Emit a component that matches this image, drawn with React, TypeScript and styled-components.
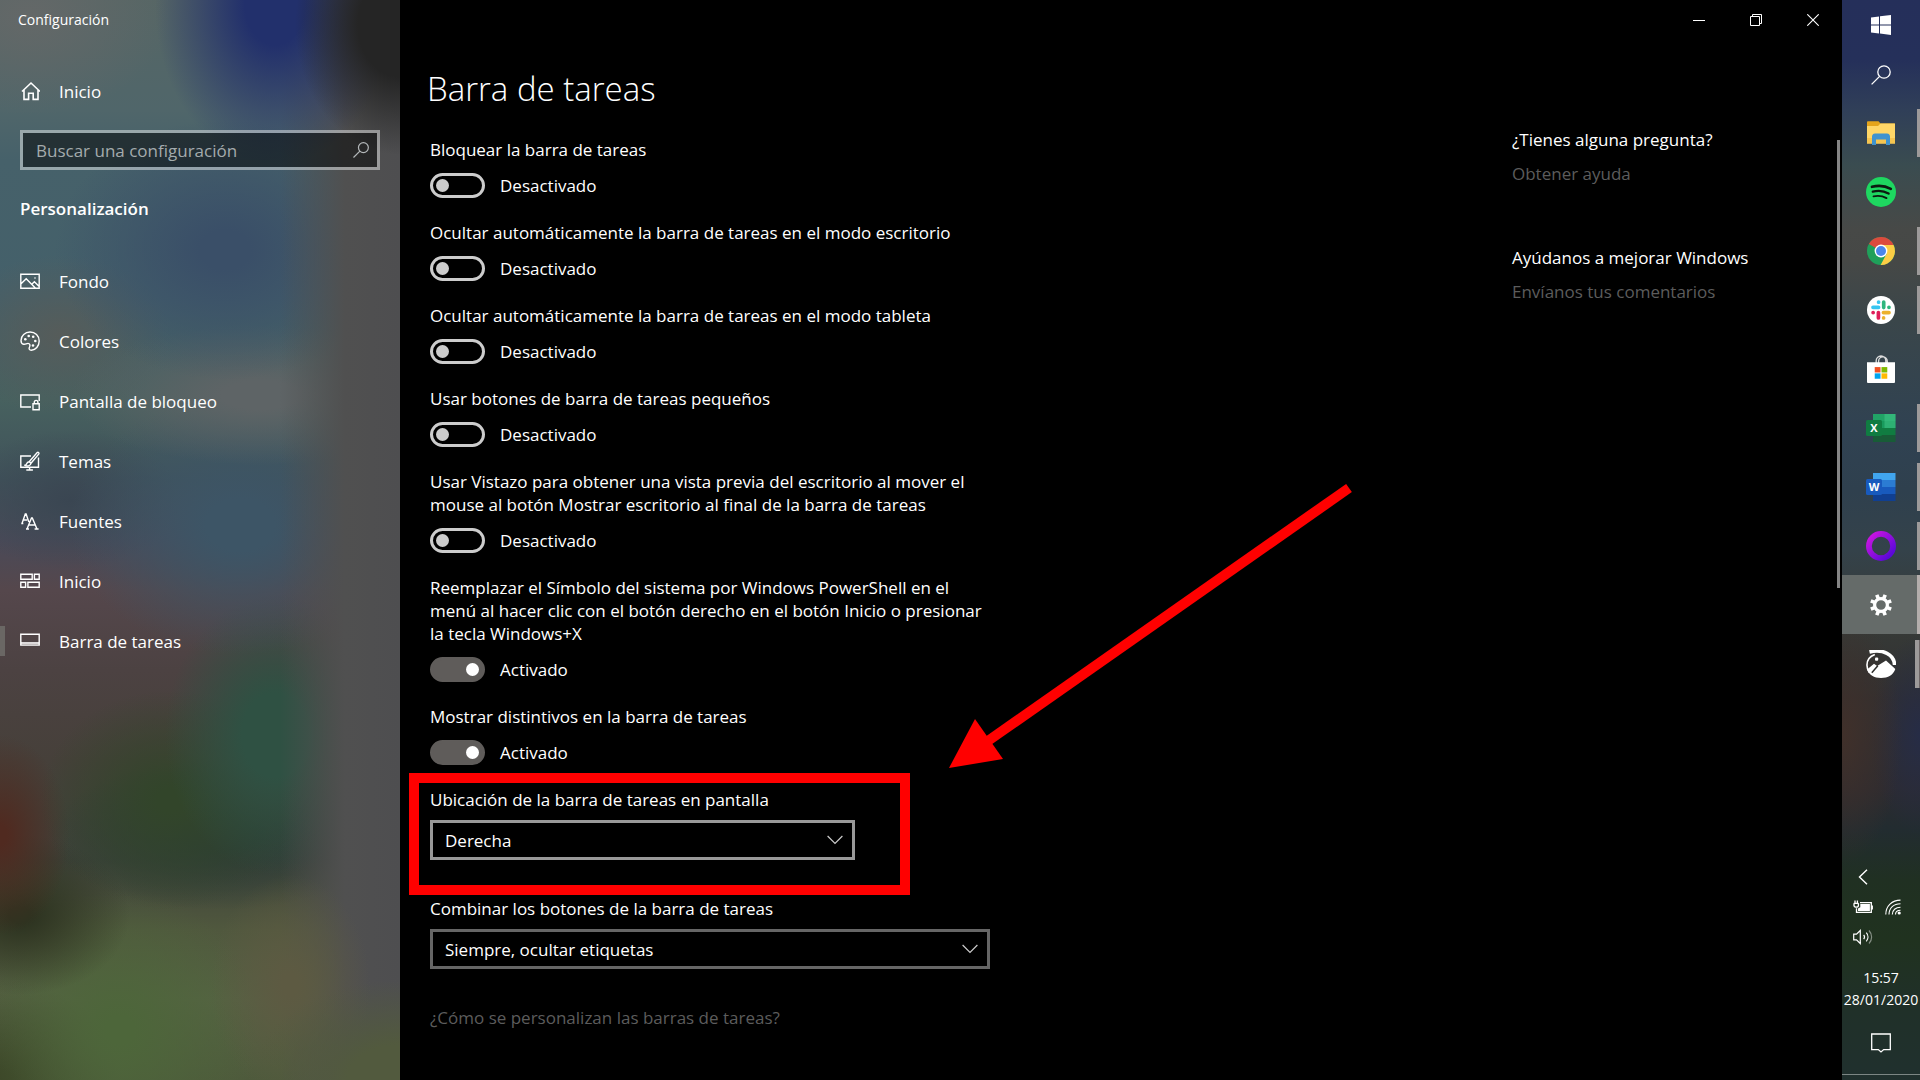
import React, { useId, useState } from "react";
import styled, { createGlobalStyle, css } from "styled-components";

const GlobalStyle = createGlobalStyle`
  *, *::before, *::after { box-sizing: border-box; }
  body {
    margin: 0;
    background: #000;
    color: #fff;
    font-family: "Segoe UI", "Open Sans", "Noto Sans", sans-serif;
    font-size: 17px;
    line-height: 23px;
  }
  button, input, select { font: inherit; color: inherit; }
  button { border: 0; padding: 0; background: none; }
  h1, h2, p { margin: 0; font: inherit; }
  svg { display: block; flex: none; }
`;

const Desktop = styled.div`
  display: grid;
  grid-template-columns: 400px minmax(0, 1fr) 78px;
  min-height: 100vh;
`;

/* ---------- Sidebar ---------- */

const Sidebar = styled.aside`
  display: flex;
  flex-direction: column;
  background:
    radial-gradient(105px 130px at 400px 25px, #252525 40%, #25252500 100%),
    radial-gradient(150px 100px at 400px 1080px, #525a3e 35%, #525a3e00 100%),
    radial-gradient(80px 110px at 290px 985px, #5d5a42 10%, #5d5a4200 100%),
    radial-gradient(120px 160px at 275px 5px, #22306c 25%, #22306c00 100%),
    linear-gradient(90deg, #50505000 280px, #505050 345px, #4e4e50 400px),
    radial-gradient(140px 100px at 30px 15px, #646868 0, #64686800 100%),
    radial-gradient(170px 130px at 225px 250px, #3a4f68 15%, #3a4f6800 100%),
    radial-gradient(190px 70px at 260px 395px, #5e6466 20%, #5e646600 100%),
    radial-gradient(170px 130px at 240px 525px, #3d5566 20%, #3d556600 100%),
    radial-gradient(110px 80px at 60px 335px, #565c5a 0, #565c5a00 100%),
    radial-gradient(110px 70px at 70px 500px, #3a4652 0, #3a465200 100%),
    radial-gradient(110px 140px at 275px 735px, #2f5143 30%, #2f514300 100%),
    radial-gradient(130px 110px at 170px 800px, #32452a 10%, #32452a00 100%),
    radial-gradient(170px 75px at 220px 835px, #2c3d36 20%, #2c3d3600 100%),
    radial-gradient(70px 100px at 0 835px, #502a20 10%, #502a2000 100%),
    radial-gradient(110px 80px at 20px 915px, #2d3320 10%, #2d332000 100%),
    radial-gradient(140px 140px at 120px 1030px, #4d663a 10%, #4d663a00 100%),
    radial-gradient(120px 100px at 0 1080px, #3c4628 10%, #3c462800 100%),
    linear-gradient(180deg, #566665 0, #50666a 110px, #46616a 160px, #44606a 300px,
      #47615f 400px, #40525a 480px, #4a4a58 540px, #55474c 590px, #4c4242 670px,
      #46403a 760px, #3e423a 860px, #50583e 930px, #566244 1000px, #4e5a3c 1080px);
`;

const AppTitle = styled.p`
  padding: 9px 18px;
  font-size: 14px;
  line-height: 22px;
`;

const rowStyles = css`
  display: flex;
  align-items: center;
  gap: 19px;
  padding: 0 20px;
  color: #fff;
  text-decoration: none;
`;

const HomeLink = styled.a`
  ${rowStyles}
  height: 60px;
  margin-top: 21px;
`;

const SearchBox = styled.label`
  display: flex;
  align-items: center;
  height: 40px;
  margin: 9px 20px 0;
  padding: 0 8px 0 13px;
  border: 3px solid #ffffff70;
  background: #00000080;
  background-clip: padding-box;
  color: #b4b8ba;
`;

const SearchInput = styled.input`
  flex: 1;
  min-width: 0;
  padding: 0;
  border: 0;
  outline: 0;
  background: transparent;
  &::placeholder { color: #a4abad; opacity: 1; }
`;

const SectionTitle = styled.h2`
  margin: 27px 20px 0;
  font-weight: 600;
  line-height: 24px;
`;

const NavList = styled.nav`
  display: flex;
  flex-direction: column;
  margin-top: 30px;
`;

const NavLink = styled.a<{ $active?: boolean }>`
  ${rowStyles}
  height: 60px;
  background: ${(p) =>
    p.$active ? "linear-gradient(#6a6764, #6a6764) left center / 5px 30px no-repeat" : "none"};
`;

/* ---------- Main pane ---------- */

const Main = styled.main`
  position: relative;
  display: flex;
  flex-direction: column;
  background: #000;
`;

const TitleBar = styled.header`
  display: flex;
  justify-content: flex-end;
  height: 40px;
  padding-right: 1px;
`;

const WindowButton = styled.button`
  display: grid;
  place-items: center;
  width: 57px;
  height: 40px;
`;

const Pane = styled.div`
  flex: 1;
  display: flex;
  justify-content: space-between;
  gap: 24px;
`;

const Settings = styled.section`
  display: flex;
  flex-direction: column;
  align-items: flex-start;
  padding: 26px 0 0 30px;
`;

const PageTitle = styled.h1`
  margin: 0 0 26px -3px;
  font-size: 33px;
  font-weight: 300;
  line-height: 46px;
`;

const ToggleField = styled.div`
  display: flex;
  flex-direction: column;
  gap: 12px;
  max-width: 560px;
  margin-bottom: 23px;
`;

const ToggleRow = styled.div`
  display: flex;
  align-items: center;
  gap: 15px;
  height: 25px;
`;

const Switch = styled.input`
  appearance: none;
  display: flex;
  align-items: center;
  justify-content: flex-start;
  width: 55px;
  height: 25px;
  margin: 0;
  padding: 0 3px;
  border: 3px solid #ccc;
  border-radius: 13px;
  &::before {
    content: "";
    width: 13px;
    height: 13px;
    border-radius: 50%;
    background: #ccc;
  }
  &:checked {
    justify-content: flex-end;
    border-color: #5f5c5a;
    background: #5f5c5a;
  }
  &:checked::before { background: #fff; }
`;

const SelectField = styled.div<{ $width: number }>`
  position: relative;
  display: flex;
  flex-direction: column;
  gap: 9px;
  width: ${(p) => p.$width}px;
  margin-bottom: 37px;
`;

const SelectBox = styled.div<{ $bright?: boolean }>`
  display: grid;
  align-items: center;
  border: 3px solid ${(p) => (p.$bright ? "#999" : "#666")};
  > * { grid-area: 1 / 1; }
  > svg { justify-self: end; margin-right: 9px; color: #ccc; pointer-events: none; }
`;

const Select = styled.select`
  appearance: none;
  width: 100%;
  height: 34px;
  padding: 0 40px 0 12px;
  border: 0;
  outline: 0;
  background: #000;
`;

const Highlight = styled.div`
  position: absolute;
  inset: -15px -55px -35px -21px;
  border: 10px solid #f00;
  pointer-events: none;
`;

const MutedLink = styled.a`
  color: #5c5c5c;
  text-decoration: none;
`;

const Help = styled.aside`
  display: flex;
  gap: 12px;
  align-items: flex-start;
  padding: 88px 2px 0 0;
`;

const HelpText = styled.div`
  display: flex;
  flex-direction: column;
  gap: 60px;
  width: 313px;
  line-height: 24px;
`;

const HelpGroup = styled.div`
  display: flex;
  flex-direction: column;
  gap: 10px;
`;

const ScrollThumb = styled.div`
  width: 3px;
  height: 448px;
  margin-top: 12px;
  background: #858585;
`;

const Arrow = styled.svg`
  position: absolute;
  left: 540px;
  top: 480px;
  pointer-events: none;
`;

/* ---------- Taskbar ---------- */

const Taskbar = styled.nav`
  display: flex;
  flex-direction: column;
  background:
    radial-gradient(60px 130px at 0 735px, #40302a 0, #40302a00 100%),
    radial-gradient(50px 100px at 78px 735px, #262c46 0, #262c4600 100%),
    linear-gradient(180deg, #252f5a 0, #25305a 60px, #303f58 110px, #3a4c50 165px,
      #474947 230px, #464846 260px, #3a464a 320px, #304252 430px, #2f404e 490px,
      #34424a 550px, #373b38 620px, #302f30 700px, #2c2b30 790px, #222c30 830px,
      #203022 880px, #20321f 940px, #203028 1000px, #20302e 1080px);
`;

const TaskButton = styled.button<{ $active?: boolean; $open?: boolean; $h?: number }>`
  display: flex;
  align-items: center;
  justify-content: center;
  height: ${(p) => p.$h ?? 59}px;
  background: ${(p) =>
    p.$active
      ? "linear-gradient(#b4aeac, #b4aeac) right center / 3px 100% no-repeat, #656b69"
      : p.$open
        ? "linear-gradient(#9d9a9a, #9d9a9a) right center / 3px 48px no-repeat"
        : "none"};
`;

const StackedTaskButton = styled(TaskButton)`
  background:
    linear-gradient(#9d9a9a, #9d9a9a) right 1px center / 4px 48px no-repeat,
    linear-gradient(#6d6566, #6d6566) right center / 1px 48px no-repeat;
`;

const StartArea = styled.div`
  display: flex;
  flex-direction: column;
  padding-bottom: 3px;
`;

const Tray = styled.div`
  display: flex;
  flex-direction: column;
  margin-top: auto;
`;

const TrayIcons = styled.div`
  display: grid;
  grid-template-columns: 20px 16px;
  grid-auto-rows: 30px;
  align-items: center;
  column-gap: 12px;
  padding-left: 11px;
`;

const TrayButton = styled.button`
  display: grid;
  place-items: center;
`;

const Clock = styled.button`
  display: flex;
  flex-direction: column;
  align-items: center;
  margin-top: 15px;
  font-size: 14px;
  line-height: 22px;
`;

const Notifications = styled.button`
  display: grid;
  place-items: center;
  height: 62px;
  margin-top: 1px;
`;

const ShowDesktop = styled.button`
  height: 6px;
  border-top: 1px solid #7c8684;
`;

/* ---------- Icons ---------- */

type LineProps = { w?: number; h?: number; sw?: number; box?: string; children: React.ReactNode };

const Line = ({ w = 20, h = 20, sw = 1.4, box, children }: LineProps) => (
  <svg width={w} height={h} viewBox={box ?? `0 0 ${w} ${h}`} fill="none" stroke="currentColor" strokeWidth={sw} aria-hidden="true">
    {children}
  </svg>
);

const HomeIcon = () => (
  <Line sw={1.6}>
    <path d="M2 10.5 11 2l9 8.500M4 9v9.400h4.600v-6.200h4.600v6.200H18V9" />
  </Line>
);
const SearchIcon = ({ size = 16 }: { size?: number }) => (
  <Line w={size} h={size} box="0 0 20 20" sw={size > 18 ? 1.3 : 1.5}>
    <circle cx="13" cy="7" r="6.2" />
    <path d="M8.6 11.4.6 19.4" />
  </Line>
);
const PictureIcon = () => (
  <Line>
    <path d="M.8 3.300h18.400v14H.8zM.8 13l5.400-5.200 9.400 9.400M11.800 13.300l2.600-2.600 4.800 4.800" />
    <circle cx="15" cy="7" r="0.8" fill="currentColor" stroke="none" />
  </Line>
);
const PaletteIcon = () => (
  <Line>
    <path d="M1 9.400C1 4.700 5.100 1 10 1c5.200 0 9.200 3.900 9.200 9 0 5-3.700 9.200-7.800 9.200-2.200 0-2.800-1.500-1.900-3.200.9-1.800.3-3.600-1.500-3.600-1.700 0-2.600 1.300-4.400.8C1.900 12.800 1 11.400 1 9.400z" />
    <g fill="currentColor" stroke="none">
      <circle cx="5.300" cy="8.300" r="1.300" />
      <circle cx="8.700" cy="5" r="1.300" />
      <circle cx="13.200" cy="5.700" r="1.300" />
      <circle cx="15.300" cy="10" r="1.300" />
      <circle cx="13" cy="14.500" r="1.300" />
    </g>
  </Line>
);
const LockScreenIcon = () => (
  <Line>
    <path d="M11 16H.8V4h18.400v6M13 12.800h6.200v6H13zM14.300 12.800v-1.600a1.800 1.800 0 0 1 3.600 0v1.600" />
  </Line>
);
const ThemesIcon = () => (
  <Line>
    <path d="M11 5H.8v11.300h17.700V6.500M9.600 16.300V19M6.300 19h6.600" />
    <path d="M9.200 10.700 17.200 1.600c1-.8 2.300.4 1.500 1.500L11 12.300M9.200 10.700c-2.100 0-2.400 1.400-2.800 2.500-.3.700-1 .9-2 .9 2.600 1.400 6.300 1.200 6.600-1.800z" />
  </Line>
);
const FontsIcon = () => (
  <Line>
    <path d="M2 12.500 5.300 3h.8l2.700 8M3.300 9h3.800M1.300 12.500h2M7 18l4.500-11h.8L17 18M8.700 14h6.600M6 18h3M14.600 18h4" />
  </Line>
);
const StartTilesIcon = () => (
  <Line>
    <path d="M.8 3.300h11.400v4.900H.8zM14.400 3.300h4.800v4.900h-4.800zM.8 11.200h4.800v5H.8zM7.900 11.200h11.300v5H7.900z" />
  </Line>
);
const TaskbarIcon = () => (
  <Line>
    <path d="M.8 3.300h18.400v10.800H.8z" />
    <path d="M1 12.200h18" strokeWidth="2.400" opacity="0.8" />
  </Line>
);
const ChevronDown = () => (
  <Line w={16} h={10} sw={1.2}>
    <path d="M.6 1 8 8.400 15.400 1" />
  </Line>
);

const WindowsIcon = () => (
  <svg width="20" height="20" viewBox="0 0 20 20" fill="#fff" aria-hidden="true">
    <path d="M0 2.500 8 1.400v8H0zM9 1.200 20 0v9.400H9zM0 10.400h8v8.100l-8-1.100zM9 10.400h11V20L9 18.600z" />
  </svg>
);
const FolderIcon = () => (
  <svg width="28" height="24" viewBox="0 0 28 24" aria-hidden="true">
    <path d="M0 1.500C0 .7.400.3 1 .3h10.500l2 2.200H27c.6 0 1 .3 1 1V22H0z" fill="#e5a51b" />
    <path d="M0 5h11l2.500-2.500H28v20H0z" fill="#ffd767" />
    <path d="M0 17h28v5.500H0z" fill="#f6c550" />
    <path d="M5 24v-8.500c0-1.500 1-3 3-3h12c2 0 3 1.500 3 3V24h-4v-5.500H9V24z" fill="#3f93cf" />
  </svg>
);
const SpotifyIcon = () => (
  <svg width="30" height="30" viewBox="0 0 30 30" aria-hidden="true">
    <circle cx="15" cy="15" r="15" fill="#1ed760" />
    <g fill="none" stroke="#0c1a10" strokeLinecap="round">
      <path d="M6 9.800c6.500-1.700 13.500-.9 18.800 2.100" strokeWidth="2.700" />
      <path d="M6.800 14.700c5.400-1.400 11.300-.7 15.800 1.900" strokeWidth="2.300" />
      <path d="M7.500 19.400c4.500-1 9.200-.4 13 1.700" strokeWidth="1.900" />
    </g>
  </svg>
);
const ChromeIcon = () => (
  <svg width="28" height="28" viewBox="0 0 28 28" aria-hidden="true">
    <circle cx="14" cy="14" r="14" fill="#1fa05a" />
    <path d="M14 14 1.900 7A14 14 0 0 1 26.600 8H14z" fill="#dc4a3d" />
    <path d="M14 8h12.600A14 14 0 0 1 13.600 28L19.500 17z" fill="#fccd45" />
    <circle cx="14" cy="14" r="6.400" fill="#fff" />
    <circle cx="14" cy="14" r="5" fill="#4a86ea" />
  </svg>
);
const SlackIcon = () => (
  <svg width="28" height="28" viewBox="0 0 29 29" aria-hidden="true">
    <circle cx="14.500" cy="14.500" r="14.500" fill="#fff" />
    <g strokeWidth="3.800" strokeLinecap="round" fill="none">
      <path d="M6.200 11.700h5.800M12 6.300v.2" stroke="#36c5f0" />
      <path d="M17.300 6.300V12M22.700 11.700h.1" stroke="#2eb67d" />
      <path d="M17 17.300h5.800M17.200 22.700v.1" stroke="#ecb22e" />
      <path d="M11.800 17.200v5.600M6.300 17.300h.1" stroke="#e01e5a" />
    </g>
  </svg>
);
const StoreIcon = () => (
  <svg width="28" height="28" viewBox="0 0 29 29" aria-hidden="true">
    <path d="M9.500 8.500V6a5 5 0 0 1 10 0v2.500M12 8.500V6.500a4.500 4.500 0 0 1 9 0v2" fill="none" stroke="#ddd" strokeWidth="1.400" />
    <path d="M0 7.500h29V28a1 1 0 0 1-1 1H1a1 1 0 0 1-1-1z" fill="#fff" />
    <path d="M8 12.500h6v5.600H8z" fill="#f25022" />
    <path d="M15 12.500h6v5.600h-6z" fill="#7fba00" />
    <path d="M8 19h6v5.600H8z" fill="#00a4ef" />
    <path d="M15 19h6v5.600h-6z" fill="#ffb900" />
  </svg>
);

const OfficeIcon = ({ letter, shades, tile, split }: { letter: string; shades: string[]; tile: string; split?: boolean }) => (
  <svg width="30" height="28" viewBox="0 0 30 28" aria-hidden="true">
    {shades.map((c, i) => (
      <path key={c} d={`M7 ${i * 7}h22.500v7H7z`} fill={c} />
    ))}
    {split && <path d="M18.500 0h11v7h-11zM18.500 7h11v7h-11z" fill="#4fd596" opacity="0.400" />}
    <rect y="6" width="16" height="16" rx="1.500" fill={tile} />
    <text x="8" y="18" textAnchor="middle" fill="#fff" fontSize="11" fontWeight="700" fontFamily="Open Sans, sans-serif">
      {letter}
    </text>
  </svg>
);

const RingIcon = () => (
  <svg width="30" height="30" viewBox="0 0 30 30" aria-hidden="true">
    <defs>
      <linearGradient id="ring" x1="0" y1="0" x2="1" y2="1">
        <stop offset="0.100" stopColor="#c414e0" />
        <stop offset="0.900" stopColor="#5a08d8" />
      </linearGradient>
    </defs>
    <circle cx="15" cy="15" r="12.100" fill="none" stroke="url(#ring)" strokeWidth="5.800" />
  </svg>
);
const GearIcon = () => (
  <svg width="22" height="22" viewBox="0 0 22 22" fill="none" stroke="#fff" aria-hidden="true">
    <circle cx="11" cy="11" r="6.400" strokeWidth="3.200" />
    {[22.5, 67.5, 112.5, 157.5, 202.5, 247.5, 292.5, 337.5].map((a) => (
      <path key={a} d="M11 0v4.200" strokeWidth="3.600" transform={`rotate(${a} 11 11)`} />
    ))}
  </svg>
);
const LandscapeIcon = () => (
  <svg width="30" height="28" viewBox="0 0 30 28" aria-hidden="true">
    <path d="M3.500 1.900C17-1.200 28.200 4.300 28.600 15" fill="none" stroke="#fff" strokeWidth="3.600" />
    <path d="M8.800 4.500C3.500 6.500 .8 11 1 15.500c0 3 1 5 2.300 7" fill="none" stroke="#fff" strokeWidth="1.600" />
    <path d="M1 19.500 8 13.700l3.200 2.200L20 10.500l9.300 8.500C27.500 24.800 22 28 15 28S3 24.500 1 19.500z" fill="#fff" />
    <path d="m5.800 22.800 6-7" stroke="#2c2c2a" strokeWidth="1.500" />
    <rect x="9" y="7.500" width="3.200" height="3.200" rx="1" fill="#fff" />
  </svg>
);

const BatteryIcon = () => (
  <Line w={20} h={14} sw={1.3}>
    <path d="M7 2.600h11.300v9.800H3.500V8.200M.8 3.300h4.700M1 3.300v2.200c0 1.200 1 1.700 2.200 1.700s2.200-.5 2.200-1.700V3.300M2 3V.5M4.400 3V.5M19.300 5.500v4" />
    <path d="M7.300 4h9.600v7H5V8.600l2.300-1.400z" fill="currentColor" stroke="none" />
  </Line>
);
const WifiIcon = () => (
  <Line w={16} h={16} sw={1.1}>
    <path d="M.8 15.500C.8 7 7 1.100 15.500 1.100M4 15.500C4 9 8.700 4.700 15.500 4.700M7.300 15.500c0-4.200 3.300-7.300 8.200-7.300M10.500 15.500c0-2.500 2-4.300 5-4.300" />
    <circle cx="14.200" cy="14" r="1.600" fill="currentColor" stroke="none" />
  </Line>
);
const SpeakerIcon = () => (
  <Line w={20} h={16} sw={1.2}>
    <path d="M.7 5.200h2.800L7.300 1.500v13L3.500 10.800H.7zM10.700 5.800c1 1.300 1 3.100 0 4.400M13.300 3.700c2.200 2.500 2.200 6.100 0 8.600" />
    <path d="M16 1.500c3.500 3.800 3.500 9.200 0 13" opacity="0.450" />
  </Line>
);

/* ---------- Data ---------- */

const navItems = [
  { label: "Fondo", icon: <PictureIcon /> },
  { label: "Colores", icon: <PaletteIcon /> },
  { label: "Pantalla de bloqueo", icon: <LockScreenIcon /> },
  { label: "Temas", icon: <ThemesIcon /> },
  { label: "Fuentes", icon: <FontsIcon /> },
  { label: "Inicio", icon: <StartTilesIcon /> },
  { label: "Barra de tareas", icon: <TaskbarIcon />, active: true },
];

const toggles = [
  { label: "Bloquear la barra de tareas", on: false },
  { label: "Ocultar automáticamente la barra de tareas en el modo escritorio", on: false },
  { label: "Ocultar automáticamente la barra de tareas en el modo tableta", on: false },
  { label: "Usar botones de barra de tareas pequeños", on: false },
  {
    label: "Usar Vistazo para obtener una vista previa del escritorio al mover el mouse al botón Mostrar escritorio al final de la barra de tareas",
    on: false,
  },
  {
    label: "Reemplazar el Símbolo del sistema por Windows PowerShell en el menú al hacer clic con el botón derecho en el botón Inicio o presionar la tecla Windows+X",
    on: true,
  },
  { label: "Mostrar distintivos en la barra de tareas", on: true },
];

const helpGroups = [
  { title: "¿Tienes alguna pregunta?", link: "Obtener ayuda" },
  { title: "Ayúdanos a mejorar Windows", link: "Envíanos tus comentarios" },
];

const apps = [
  { name: "Explorador de archivos", icon: <FolderIcon />, open: true },
  { name: "Spotify", icon: <SpotifyIcon /> },
  { name: "Chrome", icon: <ChromeIcon />, open: true },
  { name: "Slack", icon: <SlackIcon />, open: true },
  { name: "Microsoft Store", icon: <StoreIcon /> },
  {
    name: "Excel",
    icon: <OfficeIcon letter="X" shades={["#21a366", "#189a5c", "#107c41", "#185c37"]} tile="#107c41" split />,
    open: true,
  },
  {
    name: "Word",
    icon: <OfficeIcon letter="W" shades={["#41a5ee", "#2b7cd3", "#185abd", "#103f91"]} tile="#185abd" />,
    open: true,
  },
  { name: "Cortana", icon: <RingIcon />, open: true },
  { name: "Configuración", icon: <GearIcon />, active: true },
];

/* ---------- Components ---------- */

function Toggle({ label, on }: { label: string; on: boolean }) {
  const id = useId();
  const [checked, setChecked] = useState(on);
  return (
    <ToggleField>
      <label htmlFor={id}>{label}</label>
      <ToggleRow>
        <Switch id={id} type="checkbox" checked={checked} onChange={() => setChecked(!checked)} />
        <span>{checked ? "Activado" : "Desactivado"}</span>
      </ToggleRow>
    </ToggleField>
  );
}

type DropdownProps = { label: string; options: string[]; width: number; bright?: boolean; highlighted?: boolean };

function Dropdown({ label, options, width, bright, highlighted }: DropdownProps) {
  const id = useId();
  return (
    <SelectField $width={width}>
      <label htmlFor={id}>{label}</label>
      <SelectBox $bright={bright}>
        <Select id={id}>
          {options.map((o) => (
            <option key={o}>{o}</option>
          ))}
        </Select>
        <ChevronDown />
      </SelectBox>
      {highlighted && <Highlight />}
    </SelectField>
  );
}

export default function App() {
  return (
    <>
      <GlobalStyle />
      <Desktop>
        <Sidebar>
          <AppTitle>Configuración</AppTitle>
          <HomeLink href="#inicio">
            <HomeIcon />
            Inicio
          </HomeLink>
          <SearchBox>
            <SearchInput type="text" placeholder="Buscar una configuración" aria-label="Buscar una configuración" />
            <SearchIcon />
          </SearchBox>
          <SectionTitle>Personalización</SectionTitle>
          <NavList>
            {navItems.map((item) => (
              <NavLink key={item.label} href="#" $active={item.active}>
                {item.icon}
                {item.label}
              </NavLink>
            ))}
          </NavList>
        </Sidebar>

        <Main>
          <TitleBar>
            <WindowButton aria-label="Minimizar">
              <Line w={12} h={12} sw={1}><path d="M0 6.500h12" /></Line>
            </WindowButton>
            <WindowButton aria-label="Restaurar">
              <Line w={12} h={12} sw={1}><path d="M.5 2.500h9v9h-9zM2.500 2.500v-2h9v9h-2" /></Line>
            </WindowButton>
            <WindowButton aria-label="Cerrar">
              <Line w={12} h={12} sw={1.1}><path d="m.3.300 11.400 11.400M11.700.300.300 11.700" /></Line>
            </WindowButton>
          </TitleBar>
          <Pane>
            <Settings>
              <PageTitle>Barra de tareas</PageTitle>
              {toggles.map((t) => (
                <Toggle key={t.label} label={t.label} on={t.on} />
              ))}
              <Dropdown
                label="Ubicación de la barra de tareas en pantalla"
                options={["Derecha", "Izquierda", "Superior", "Inferior"]}
                width={425}
                bright
                highlighted
              />
              <Dropdown
                label="Combinar los botones de la barra de tareas"
                options={["Siempre, ocultar etiquetas", "Nunca"]}
                width={560}
              />
              <MutedLink href="#">¿Cómo se personalizan las barras de tareas?</MutedLink>
            </Settings>
            <Help>
              <HelpText>
                {helpGroups.map((g) => (
                  <HelpGroup key={g.title}>
                    <h2>{g.title}</h2>
                    <MutedLink href="#">{g.link}</MutedLink>
                  </HelpGroup>
                ))}
              </HelpText>
              <ScrollThumb />
            </Help>
          </Pane>
          <Arrow width="420" height="295" viewBox="0 0 420 295" aria-hidden="true">
            <path d="M409 8 45 263" stroke="#f00" strokeWidth="10" />
            <path d="M9 288 35 239 63 279z" fill="#f00" />
          </Arrow>
        </Main>

        <Taskbar>
          <StartArea>
            <TaskButton $h={50} aria-label="Inicio"><WindowsIcon /></TaskButton>
            <TaskButton $h={50} aria-label="Buscar"><SearchIcon size={20} /></TaskButton>
          </StartArea>
          {apps.map((a) => (
            <TaskButton key={a.name} aria-label={a.name} $open={a.open} $active={a.active}>
              {a.icon}
            </TaskButton>
          ))}
          <StackedTaskButton aria-label="Fotos"><LandscapeIcon /></StackedTaskButton>
          <Tray>
            <TrayIcons>
              <TrayButton aria-label="Mostrar iconos ocultos">
                <Line w={10} h={16} sw={1.4}><path d="M9 .8 1.500 8 9 15.200" /></Line>
              </TrayButton>
              <span />
              <TrayButton aria-label="Batería"><BatteryIcon /></TrayButton>
              <TrayButton aria-label="Wi-Fi"><WifiIcon /></TrayButton>
              <TrayButton aria-label="Volumen"><SpeakerIcon /></TrayButton>
            </TrayIcons>
            <Clock>
              <span>15:57</span>
              <span>28/01/2020</span>
            </Clock>
            <Notifications aria-label="Notificaciones">
              <Line w={20} h={20} sw={1.3}><path d="M.7 1h18.600v15.600h-6.600L10 19l-2.700-2.400H.7z" /></Line>
            </Notifications>
            <ShowDesktop aria-label="Mostrar escritorio" />
          </Tray>
        </Taskbar>
      </Desktop>
    </>
  );
}
